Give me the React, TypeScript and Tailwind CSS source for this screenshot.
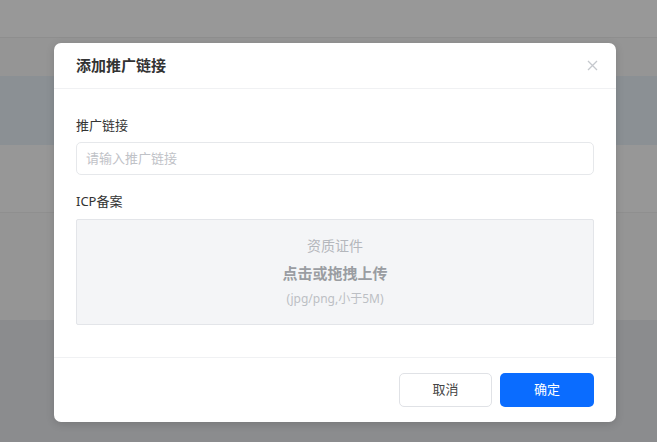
import React from "react";

const font = {
  fontFamily: '"Noto Sans", "Noto Sans CJK SC", sans-serif',
};

export default function App() {
  return (
    <div className="relative h-[442px] w-[657px] overflow-hidden bg-[#959595]" style={font}>
      {/* page behind the overlay */}
      <div className="flex flex-col">
        <div className="h-[38px] border-b border-[#8e8e8e] bg-[#989898]" />
        <div className="h-[38px] bg-[#959595]" />
        <div className="h-[69px] bg-[#8b9094]" />
        <div className="h-[68px] border-b border-[#8f8f8f] bg-[#979797]" />
        <div className="h-[107px] bg-[#959595]" />
        <div className="h-[122px] bg-[#8b8c8e]" />
      </div>

      {/* modal */}
      <div className="absolute left-[54px] top-[43px] w-[562px] rounded-[7px] bg-white shadow-[0_2px_8px_rgba(0,0,0,0.15)]">
        <div className="flex h-[46px] items-center justify-between border-b border-[#f0f1f3] pl-[22px] pr-[18px]">
          <span className="text-[15px] font-bold text-[#333]">添加推广链接</span>
          <svg width="11" height="11" viewBox="0 0 11 11" className="text-[#c5c8cd]">
            <path d="M1 1L10 10M10 1L1 10" stroke="currentColor" strokeWidth="1.3" />
          </svg>
        </div>

        <div className="px-[22px] pb-[32px] pt-[27px]">
          <div className="text-[13px] leading-[18px] text-[#333]">推广链接</div>
          <div className="mt-[8px] flex h-[33px] items-center rounded-[5px] border border-[#e6e8eb] px-[9px] text-[13px] text-[#bfc2c7]">
            请输入推广链接
          </div>
          <div className="mt-[17px] text-[13px] leading-[18px] text-[#333]">ICP备案</div>
          <div className="mt-[9px] flex h-[106px] flex-col items-center justify-center rounded-[2px] border border-[#e3e5e9] bg-[#f4f5f7]">
            <div className="text-[14px] leading-[20px] text-[#b4b7bc]">资质证件</div>
            <div className="mt-[7px] text-[15px] font-bold leading-[20px] text-[#9a9da2]">点击或拖拽上传</div>
            <div className="mt-[7px] text-[12px] leading-[18px] text-[#bcbfc4]">(jpg/png,小于5M)</div>
          </div>
        </div>

        <div className="flex justify-end gap-[8px] border-t border-[#f0f1f3] px-[22px] py-[15px]">
          <button className="h-[34px] w-[93px] rounded-[5px] border border-[#e0e2e6] bg-white text-[13px] text-[#444]">
            取消
          </button>
          <button className="h-[34px] w-[94px] rounded-[5px] bg-[#0a6cff] text-[13px] text-white">
            确定
          </button>
        </div>
      </div>
    </div>
  );
}
